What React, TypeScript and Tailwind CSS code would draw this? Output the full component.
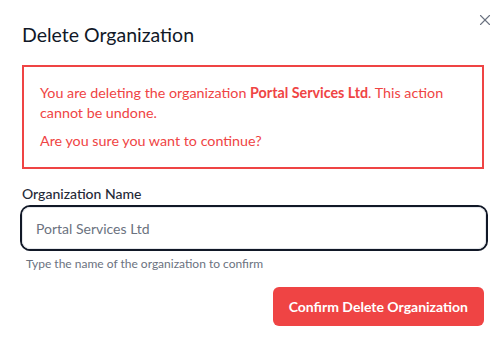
import { X } from "lucide-react";

export default function App() {
  return (
    <div
      className="relative w-[500px] h-[343px] bg-white pl-[22px] pr-4 pt-[21px]"
      style={{ fontFamily: 'Lato, "Noto Sans", sans-serif' }}
    >
      <button className="absolute top-[11px] right-[6px] text-[#6b7280]">
        <X size={18} strokeWidth={1.5} />
      </button>
      <h2 className="text-[19.5px] leading-7 font-normal text-[#111827]">
        Delete Organization
      </h2>

      <div className="mt-[16px] border-2 border-[#ef4444] p-4 text-[14.3px] leading-5 text-[#ef4444]">
        <p>
          You are deleting the organization{" "}
          <span className="font-bold">Portal Services Ltd</span>. This action
          cannot be undone.
        </p>
        <p className="mt-2">Are you sure you want to continue?</p>
      </div>

      <label className="block mt-[15px] text-[14px] leading-5 font-medium text-[#1f2937]">
        Organization Name
      </label>
      <input
        className="mt-[3px] block w-[464px] h-[42px] rounded-lg border border-[#e5e7eb] ring-2 ring-[#111827] px-[13px] text-[14px] text-[#1f2937] placeholder:text-[#6b7280] outline-none"
        placeholder="Portal Services Ltd"
      />
      <p className="mt-[7px] pl-1 text-[12px] leading-4 text-[#6b7280]">
        Type the name of the organization to confirm
      </p>

      <div className="mt-[15px] flex justify-end">
        <button className="h-[39px] px-4 rounded-md bg-[#ef4444] text-white text-[14px] font-bold">
          Confirm Delete Organization
        </button>
      </div>
    </div>
  );
}
